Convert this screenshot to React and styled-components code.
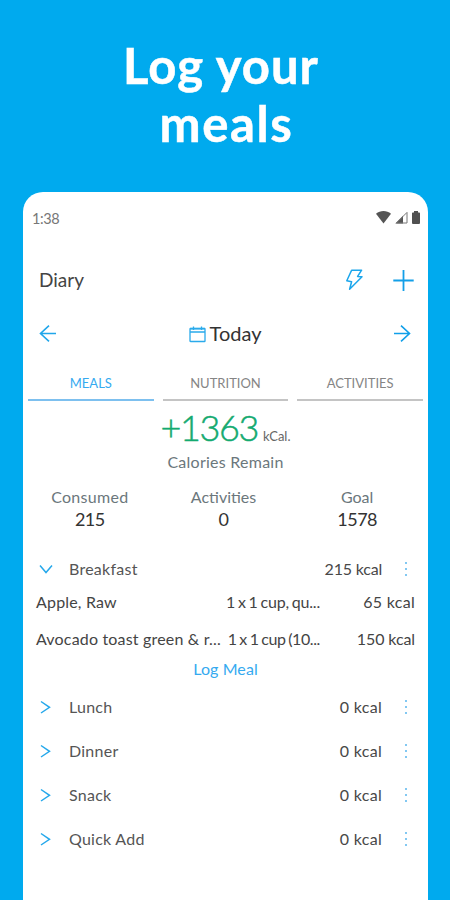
import React from 'react';
import styled, { createGlobalStyle } from 'styled-components';

const totals = [
  { label: 'Consumed', value: '215', gap: 0.3 },
  { label: 'Activities', value: '0', gap: 0 },
  { label: 'Goal', value: '1578', gap: 0 },
];

const foods = [
  { name: 'Apple, Raw', serving: '1 x 1 cup, qu...', energy: '65 kcal' },
  { name: 'Avocado toast green & r...', serving: '1 x 1 cup (10...', energy: '150 kcal', tight: true },
];

const meals = ['Lunch', 'Dinner', 'Snack', 'Quick Add'];

const MoreButton = () => (
  <MoreDots>
    <Dot />
    <Dot />
    <Dot />
  </MoreDots>
);

const App = () => {
  return (
    <Page>
      <GlobalStyle />
      <Headline>
        <HeadlineLine>Log your</HeadlineLine>
        <HeadlineLine>meals</HeadlineLine>
      </Headline>

      <Phone>
        <StatusBar>
          <Clock>1:38</Clock>
          <StatusIcons>
            <svg width="15" height="13" viewBox="0 0 15 13">
              <path d="M0 2.8C4.3-.9 10.7-.9 15 2.8L7.5 12.6Z" fill="#555" />
            </svg>
            <svg width="13" height="13" viewBox="0 0 13 13">
              <path d="M.3 12.5L8 4.8V12.5Z" fill="#555" />
              <path d="M1.4 12L12 1.4V12Z" fill="none" stroke="#777" strokeWidth="1" />
            </svg>
            <svg width="8" height="13" viewBox="0 0 8 13">
              <path d="M0 2.2Q0 1.4.8 1.4H2V0H6V1.4H7.2Q8 1.4 8 2.2V12Q8 13 7 13H1Q0 13 0 12Z" fill="#505050" />
            </svg>
          </StatusIcons>
        </StatusBar>

        <AppBar>
          <ScreenTitle>Diary</ScreenTitle>
          <AppActions>
            <svg width="18" height="22" viewBox="0 0 18 22" fill="none" stroke="#1ba6ec" strokeWidth="1.5" strokeLinejoin="round">
              <path d="M6.6 1.2H16.6L12.6 7.4L17 7.8L4.6 20.2L6.6 12.8L1.8 11.8Z" />
            </svg>
            <svg width="21" height="22" viewBox="0 0 21 22" stroke="#139fe8" strokeWidth="1.8">
              <path d="M.3 11.5H20.7M10.5 1V22" />
            </svg>
          </AppActions>
        </AppBar>

        <DateRow>
          <svg width="18" height="18" viewBox="0 0 18 18" fill="none" stroke="#20a6ea" strokeWidth="1.6">
            <path d="M10 .7L1.5 8.5L10 16.3M1.5 8.5H17" />
          </svg>
          <DateLabel>
            <svg width="17" height="17" viewBox="0 0 17 17" fill="none" stroke="#2aaaeb" strokeWidth="1.3">
              <rect x="1" y="2.5" width="15" height="13" rx=".6" />
              <path d="M1 6H16M4.5 .5V4M12.5 .5V4" />
              <path d="M1 2.7H16" strokeWidth="1.6" />
            </svg>
            <Today>Today</Today>
          </DateLabel>
          <svg width="18" height="18" viewBox="0 0 18 18" fill="none" stroke="#109fe9" strokeWidth="1.6">
            <path d="M8 .7L16.5 8.5L8 16.3M16.5 8.5H1" />
          </svg>
        </DateRow>

        <Tabs>
          <Tab $active>MEALS</Tab>
          <Tab>NUTRITION</Tab>
          <Tab>ACTIVITIES</Tab>
        </Tabs>

        <Remaining>
          <RemainingValue>+1363</RemainingValue>
          <RemainingUnit>kCal.</RemainingUnit>
        </Remaining>
        <RemainingLabel>Calories Remain</RemainingLabel>

        <Totals>
          {totals.map((total) => (
            <Total key={total.label}>
              <TotalLabel $gap={total.gap}>{total.label}</TotalLabel>
              <TotalValue>{total.value}</TotalValue>
            </Total>
          ))}
        </Totals>

        <MealRow>
          <svg width="14" height="14" viewBox="0 0 14 14" fill="none" stroke="#25a8eb" strokeWidth="1.5">
            <path d="M1 3.5L7 10.5L13 3.5" />
          </svg>
          <MealName>Breakfast</MealName>
          <MealEnergy>215 kcal</MealEnergy>
          <MoreButton />
        </MealRow>
        <FoodList>
          {foods.map((food) => (
            <FoodRow key={food.name}>
              <FoodName>{food.name}</FoodName>
              <Serving $tight={food.tight}>{food.serving}</Serving>
              <FoodEnergy $tight={food.tight}>{food.energy}</FoodEnergy>
            </FoodRow>
          ))}
        </FoodList>
        <LogMeal>Log Meal</LogMeal>

        {meals.map((meal) => (
          <MealRow key={meal}>
            <svg width="14" height="14" viewBox="0 0 14 14" fill="none" stroke="#25a8eb" strokeWidth="1.5">
              <path d="M2 1.5L10.5 7.3L2 13" />
            </svg>
            <MealName>{meal}</MealName>
            <MealEnergy $wide>0 kcal</MealEnergy>
            <MoreButton />
          </MealRow>
        ))}
      </Phone>
    </Page>
  );
};

export default App;

// Styled Components
const GlobalStyle = createGlobalStyle`
  * {
    box-sizing: border-box;
  }

  body {
    margin: 0;
    background-color: #00aaee;
  }

  svg {
    display: block;
    flex-shrink: 0;
  }
`;

const Page = styled.div`
  width: 450px;
  height: 900px;
  overflow: hidden;
  display: flex;
  flex-direction: column;
  background-color: #00aaee;
  font-family: Lato, 'Open Sans', sans-serif;
  color: #444;
  white-space: nowrap;
`;

const Headline = styled.h1`
  margin: 0;
  height: 192px;
  padding-top: 36px;
  color: #fff;
  font-size: 49px;
  font-weight: 700;
  line-height: 58px;
  text-align: center;
  -webkit-text-stroke: 0.5px #fff;
`;

const HeadlineLine = styled.span`
  display: block;
  padding-left: 3px;
  letter-spacing: 1.6px;

  &:first-child {
    padding: 0 8px 0 0;
    letter-spacing: 1px;
  }
`;

const Phone = styled.main`
  width: 405px;
  flex: 1;
  margin-left: 23px;
  border-radius: 20px 20px 0 0;
  background-color: #fff;
`;

const StatusBar = styled.div`
  height: 52px;
  padding: 0 8px 0 9px;
  display: flex;
  align-items: center;
  justify-content: space-between;
`;

const Clock = styled.span`
  font-size: 14.5px;
  letter-spacing: -0.4px;
  color: #777;
`;

const StatusIcons = styled.div`
  padding-bottom: 1px;
  display: flex;
  align-items: center;
  gap: 4px;
`;

const AppBar = styled.header`
  height: 72px;
  padding: 0 14px 0 16px;
  display: flex;
  align-items: center;
  justify-content: space-between;
`;

const ScreenTitle = styled.h2`
  margin: 0;
  padding-bottom: 1px;
  font-size: 19px;
  font-weight: 400;
  color: #444;
`;

const AppActions = styled.div`
  display: flex;
  align-items: center;
  gap: 30px;
`;

const DateRow = styled.div`
  height: 36px;
  padding: 0 17px 0 16px;
  display: flex;
  align-items: center;
  justify-content: space-between;
`;

const DateLabel = styled.div`
  display: flex;
  align-items: center;
  gap: 4px;
`;

const Today = styled.span`
  padding-bottom: 2px;
  font-size: 20px;
  color: #333;
`;

const Tabs = styled.nav`
  height: 50px;
  padding: 0 5px;
  display: grid;
  grid-template: 49px / repeat(3, 1fr);
  gap: 9px;
`;

const Tab = styled.div`
  display: flex;
  justify-content: center;
  padding-top: 23px;
  border-bottom: 2px solid ${({ $active }) => ($active ? '#7dc0ef' : '#c4c4c4')};
  color: ${({ $active }) => ($active ? '#35aaf0' : '#858585')};
  font-size: 13px;
  line-height: 16px;
`;

const Remaining = styled.div`
  height: 47px;
  display: flex;
  align-items: baseline;
  justify-content: center;
  gap: 5px;
  line-height: 51px;
`;

const RemainingValue = styled.span`
  font-size: 36px;
  font-weight: 300;
  letter-spacing: -1.4px;
  color: #14aa70;
  -webkit-text-stroke: 0.5px #14aa70;
`;

const RemainingUnit = styled.span`
  font-size: 13px;
  color: #666;
`;

const RemainingLabel = styled.div`
  height: 26px;
  font-size: 16px;
  line-height: 26px;
  letter-spacing: 0.25px;
  text-align: center;
  color: #6b777c;
`;

const Totals = styled.div`
  height: 72px;
  padding: 11px 4px 0 0;
  display: grid;
  grid-template-columns: repeat(3, 1fr);
`;

const Total = styled.div`
  display: flex;
  flex-direction: column;
  align-items: center;
`;

const TotalLabel = styled.span`
  font-size: 16px;
  line-height: 22px;
  letter-spacing: ${({ $gap }) => $gap}px;
  color: #6b777c;
`;

const TotalValue = styled.span`
  font-size: 18px;
  line-height: 22px;
  letter-spacing: -0.5px;
  color: #333;
`;

const MealRow = styled.div`
  height: 44px;
  padding: 0 21px 0 16px;
  display: flex;
  align-items: center;
`;

const MealName = styled.span`
  flex: 1;
  padding: 0 0 2px 16px;
  font-size: 16px;
  letter-spacing: 0.25px;
  color: #555;
`;

const MealEnergy = styled.span`
  padding-bottom: 2px;
  font-size: 16px;
  letter-spacing: ${({ $wide }) => ($wide ? '0.3px' : '-0.2px')};
  color: #484848;
`;

const MoreDots = styled.div`
  margin-left: 23px;
  display: flex;
  flex-direction: column;
  gap: 4px;
`;

const Dot = styled.span`
  width: 2px;
  height: 2px;
  border-radius: 1px;
  background-color: #58b6ee;
`;

const FoodList = styled.div`
  margin-top: -7px;
`;

const FoodRow = styled.div`
  height: 37px;
  padding: 0 13px 2px;
  display: grid;
  grid-template-columns: 186px 99px 1fr;
  align-items: center;
  font-size: 16px;
`;

const FoodName = styled.span`
  letter-spacing: 0.18px;
`;

const Serving = styled.span`
  padding-right: 1px;
  letter-spacing: ${({ $tight }) => ($tight ? '-0.4px' : '-0.2px')};
  word-spacing: -1px;
  text-align: right;
`;

const FoodEnergy = styled.span`
  letter-spacing: ${({ $tight }) => ($tight ? '-0.1px' : '0.3px')};
  text-align: right;
`;

const LogMeal = styled.div`
  height: 27px;
  font-size: 16px;
  line-height: 21px;
  letter-spacing: 0.1px;
  text-align: center;
  color: #35aaf0;
`;
